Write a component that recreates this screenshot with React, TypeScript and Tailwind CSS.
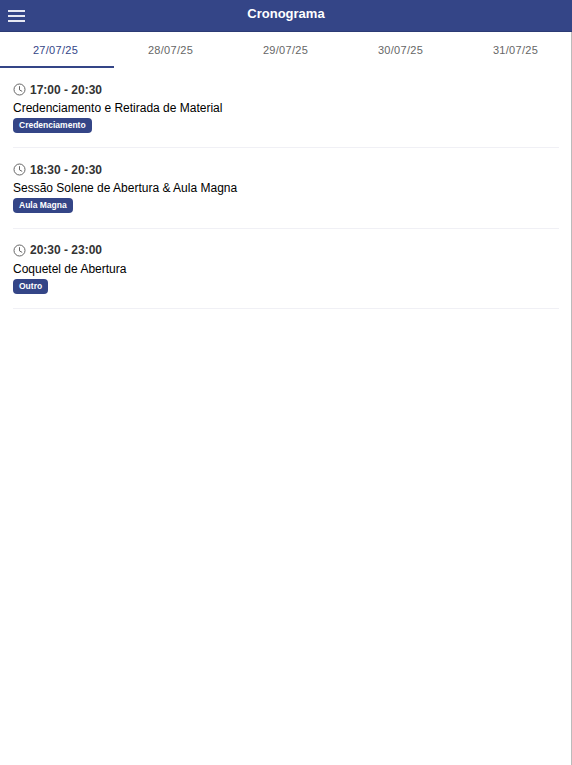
const dates = ["27/07/25", "28/07/25", "29/07/25", "30/07/25", "31/07/25"];
const items = [
  { time: "17:00 - 20:30", title: "Credenciamento e Retirada de Material", tag: "Credenciamento" },
  { time: "18:30 - 20:30", title: "Sessão Solene de Abertura & Aula Magna", tag: "Aula Magna" },
  { time: "20:30 - 23:00", title: "Coquetel de Abertura", tag: "Outro" },
];

function Clock() {
  return (
    <svg width="13" height="13" viewBox="0 0 13 13" fill="none" stroke="#666666" strokeWidth="1" className="shrink-0">
      <circle cx="6.5" cy="6.5" r="5.5" />
      <path d="M6.5 3.2V6.9L9.2 8.4" />
    </svg>
  );
}

export default function App() {
  return (
    <div className="w-[572px] min-h-[765px] flex flex-col bg-white font-['Liberation_Sans',sans-serif]">
      <header className="h-8 bg-[#344587] flex items-center relative border-b border-[#2c3b75]">
        <svg width="17" height="12" viewBox="0 0 17 12" fill="#e6e8f2" className="ml-2 mt-[1px] shrink-0">
          <rect x="0" y="0" width="17" height="2" />
          <rect x="0" y="5" width="17" height="2" />
          <rect x="0" y="10" width="17" height="2" />
        </svg>
        <h1 className="flex-1 text-center text-[13px] font-bold text-white pr-[25px] pb-[3px]">Cronograma</h1>
      </header>
      <div className="flex-1 border-r border-[#bbbbbb]">
        <nav className="relative flex h-9 -ml-[2px]">
          {dates.map((d, i) => (
            <div
              key={d}
              className={
                i === 0
                  ? "w-[115px] shrink-0 flex items-center justify-center text-[11px] tracking-[0.3px] text-[#344587]"
                  : "w-[115px] shrink-0 flex items-center justify-center text-[11px] tracking-[0.3px] text-[#666666]"
              }
            >
              {d}
            </div>
          ))}
          <span className="absolute bottom-0 left-[2px] w-[114px] h-[2px] bg-[#344587]" />
        </nav>
        <main className="pl-[13px] pr-[12px]">
          {items.map((it) => (
            <div key={it.time} className="border-b border-[#f0f0f5] h-[80.3px] pt-[12px]">
              <div className="flex items-center gap-[4px] h-[19px] text-[12px] font-bold text-[#333333]">
                <Clock />
                <span>{it.time}</span>
              </div>
              <div className="text-[12px] h-[18px] leading-[18px] text-black">{it.title}</div>
              <div className="flex mt-[1px]">
                <span className="bg-[#344587] text-white text-[8.5px] font-bold rounded-[4px] px-[6px] h-[15px] leading-[15px]">{it.tag}</span>
              </div>
            </div>
          ))}
        </main>
      </div>
    </div>
  );
}
